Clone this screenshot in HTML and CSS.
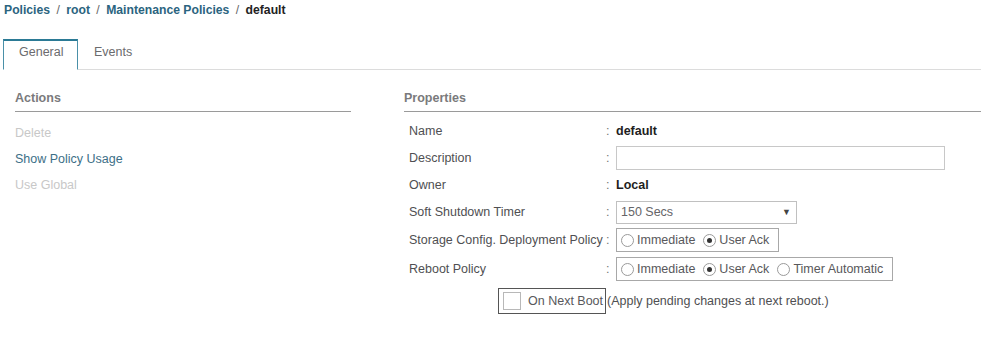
FILE: index.html
```html
<!DOCTYPE html>
<html lang="en">
<head>
  <meta charset="UTF-8" />
  <title>Maintenance Policies - default</title>
  <link rel="stylesheet" href="styles.css">
</head>
<body>

  <div class="breadcrumb">
    <a href="#">Policies</a> <span class="sep">/</span>
    <a href="#">root</a> <span class="sep">/</span>
    <a href="#">Maintenance Policies</a> <span class="sep">/</span>
    <span class="current">default</span>
  </div>

  <div class="tabs">
    <div class="tab active">General</div>
    <div class="tab">Events</div>
  </div>

  <div class="content">
    <div class="actions">
      <h3>Actions</h3>
      <ul>
        <li class="disabled">Delete</li>
        <li class="link">Show Policy Usage</li>
        <li class="disabled">Use Global</li>
      </ul>
    </div>

    <div class="properties">
      <h3>Properties</h3>
      <div class="prop-grid">
        <div class="prop-label">Name</div>
        <div class="colon">:</div>
        <div class="prop-value strong">default</div>

        <div class="prop-label">Description</div>
        <div class="colon">:</div>
        <div class="prop-value"><input type="text" class="desc-input" /></div>

        <div class="prop-label">Owner</div>
        <div class="colon">:</div>
        <div class="prop-value strong">Local</div>

        <div class="prop-label">Soft Shutdown Timer</div>
        <div class="colon">:</div>
        <div class="prop-value">
          <div class="select-box">
            <span>150 Secs</span>
            <span class="arrow">&#9660;</span>
          </div>
        </div>

        <div class="prop-label">Storage Config. Deployment Policy</div>
        <div class="colon">:</div>
        <div class="prop-value">
          <div class="radio-group">
            <label><span class="radio"></span>Immediate</label>
            <label><span class="radio checked"></span>User Ack</label>
          </div>
        </div>

        <div class="prop-label">Reboot Policy</div>
        <div class="colon">:</div>
        <div class="prop-value">
          <div class="radio-group">
            <label><span class="radio"></span>Immediate</label>
            <label><span class="radio checked"></span>User Ack</label>
            <label><span class="radio"></span>Timer Automatic</label>
          </div>
        </div>
      </div>

      <div class="next-boot">
        <div class="check-box">
          <span class="check"></span>
          <span>On Next Boot</span>
        </div>
        <span class="hint">(Apply pending changes at next reboot.)</span>
      </div>
    </div>
  </div>

</body>
</html>
```

FILE: styles.css
```css
body {
  font-family: "Liberation Sans", Arial, sans-serif;
  font-size: 12.5px;
  color: #58585b;
  margin: 0;
  background-color: white;
}

.breadcrumb {
  padding: 3px 0 0 4px;
  height: 16px;
  font-size: 12.2px;
  font-weight: bold;
  color: #555;
}

.breadcrumb a {
  color: #2b6480;
  text-decoration: none;
}

.breadcrumb .sep {
  color: #666;
  font-weight: normal;
  margin: 0 3px;
}

.breadcrumb .current {
  color: #222;
}

.tabs {
  display: flex;
  margin: 20px 0 0 3px;
  border-bottom: 1px solid #dcdcdc;
  height: 30px;
}

.tab {
  padding: 0 15px 6px 15px;
  line-height: 23px;
  color: #6b6b6e;
  border: 1px solid transparent;
  border-top-width: 2px;
  margin-bottom: -1px;
}

.tab.active {
  width: 75px;
  box-sizing: border-box;
  text-align: center;
  border-color: #4a90a8;
  border-top-color: #2b7a95;
  border-bottom-color: white;
  background-color: white;
}

.content {
  display: flex;
  gap: 53px;
  padding-top: 21px;
}

h3 {
  margin: 0;
  font-size: 12.5px;
  font-weight: bold;
  color: #7a7a7c;
  padding-bottom: 6px;
  border-bottom: 1px solid #9a9a9a;
}

.actions {
  width: 336px;
  margin-left: 15px;
}

.actions ul {
  list-style: none;
  margin: 0;
  padding: 14px 0 0 0;
}

.actions li {
  height: 26px;
}

.actions .disabled {
  color: #c8c8c8;
}

.actions .link {
  color: #3d6f87;
}

.properties {
  flex: 1;
}

.prop-grid {
  display: grid;
  grid-template-columns: 197px 10px auto;
  align-items: center;
  padding: 7px 0 0 5px;
  row-gap: 3px;
}

.prop-grid > div {
  min-height: 24px;
  display: flex;
  align-items: center;
}

.prop-label {
  color: #4f4f52;
}

.colon {
  color: #777;
}

.prop-value.strong {
  font-weight: bold;
  color: #1e1e1e;
}

.desc-input {
  width: 329px;
  height: 24px;
  box-sizing: border-box;
  border: 1px solid #c8c8c8;
  margin: 0;
}

.select-box {
  width: 181px;
  height: 23px;
  box-sizing: border-box;
  border: 1px solid #c0c0c0;
  display: flex;
  align-items: center;
  justify-content: space-between;
  padding: 0 5px 0 4px;
  color: #656568;
}

.select-box .arrow {
  font-size: 9px;
  color: #444;
}

.radio-group {
  display: flex;
  align-items: center;
  gap: 8px;
  height: 24px;
  box-sizing: border-box;
  border: 1px solid #a8a8a8;
  padding: 0 9px 0 4px;
  margin: 1px 0;
}

.radio-group label {
  display: flex;
  align-items: center;
  gap: 3px;
  color: #58585b;
}

.radio {
  width: 11px;
  height: 11px;
  border: 1px solid #9a9a9a;
  border-radius: 50%;
  position: relative;
}

.radio.checked::after {
  content: "";
  position: absolute;
  left: 3px;
  top: 3px;
  width: 5px;
  height: 5px;
  border-radius: 50%;
  background-color: #333;
}

.next-boot {
  display: flex;
  align-items: center;
  margin: 6px 0 0 94px;
}

.check-box {
  display: flex;
  align-items: center;
  gap: 7px;
  height: 24px;
  padding: 0 2px 0 4px;
  border: 1px solid #555;
  color: #58585b;
}

.check {
  width: 16px;
  height: 16px;
  border: 1px solid #b8b8b8;
}

.hint {
  color: #4f4f52;
  margin-left: 1px;
}
```
